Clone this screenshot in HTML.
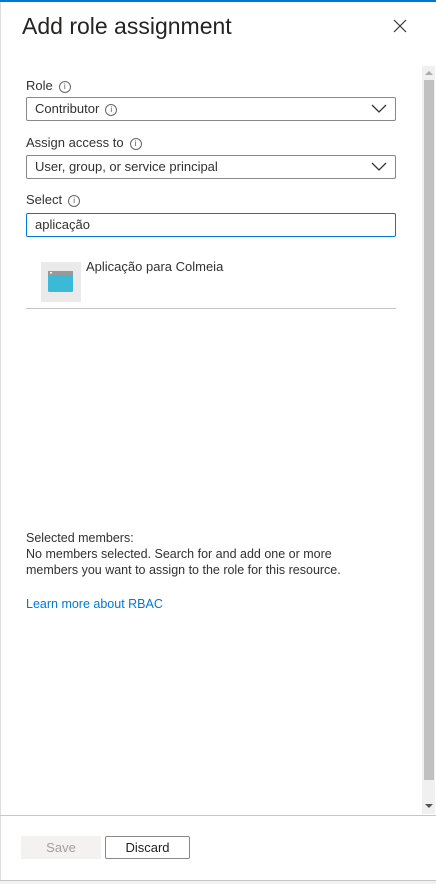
<!DOCTYPE html><html><head><style>
body{margin:0;width:436px;height:884px;position:relative;overflow:hidden;background:#fff;font-family:"Liberation Sans",sans-serif;color:#323130}
.a{position:absolute}
.lbl{font-size:13px}
.box{position:absolute;left:26px;height:22px;border:1px solid #8a8886;border-radius:2px;font-size:13px;line-height:22px;padding-left:8px;box-sizing:content-box;width:360px}
.i{display:inline-block;width:10px;height:10px;border:1px solid #666;border-radius:50%;font-size:8px;line-height:10px;text-align:center;vertical-align:1px;margin-left:6px;color:#555}
.chev{position:absolute;right:8px;top:6px}
</style></head><body>
<div class="a" style="left:0;top:0;width:436px;height:2px;background:#0078d4"></div>
<div class="a" style="left:0;top:2px;width:1px;height:878px;background:#ddd"></div>
<div class="a" style="left:22px;top:13px;font-size:23px;color:#252423">Add role assignment</div>
<svg class="a" style="left:393px;top:19px" width="14" height="14"><path d="M1 1L13 13M13 1L1 13" stroke="#333" stroke-width="1.2"/></svg>
<div class="a lbl" style="left:26px;top:78px">Role<span class="i">i</span></div>
<div class="box" style="top:97px">Contributor<span class="i">i</span><svg class="chev" width="16" height="10"><path d="M1 1L8 8L15 1" stroke="#333" fill="none" stroke-width="1.3"/></svg></div>
<div class="a lbl" style="left:26px;top:135px">Assign access to<span class="i">i</span></div>
<div class="box" style="top:155px">User, group, or service principal<svg class="chev" width="16" height="10"><path d="M1 1L8 8L15 1" stroke="#333" fill="none" stroke-width="1.3"/></svg></div>
<div class="a lbl" style="left:26px;top:192px">Select<span class="i">i</span></div>
<div class="box" style="top:213px;border-color:#0078d4">aplicação</div>
<div class="a" style="left:41px;top:262px;width:40px;height:40px;background:#eaeaea"></div>
<svg class="a" style="left:48px;top:271px" width="26" height="22"><rect x="0" y="0" width="25" height="21" rx="1" fill="#3bbad8"/><rect x="0" y="0" width="25" height="4" fill="#999"/><rect x="2" y="1" width="2" height="1.5" fill="#fff"/></svg>
<div class="a" style="left:86px;top:259px;font-size:13px">Aplicação para Colmeia</div>
<div class="a" style="left:26px;top:308px;width:370px;height:1px;background:#c8c6c4"></div>
<div class="a" style="left:26px;top:530px;font-size:12.5px;line-height:16px">Selected members:<br>No members selected. Search for and add one or more<br>members you want to assign to the role for this resource.</div>
<div class="a" style="left:26px;top:597px;font-size:12.5px;color:#0078d4">Learn more about RBAC</div>
<div class="a" style="left:422px;top:66px;width:13px;height:748px;background:#f0f0f0"></div>
<div class="a" style="left:424px;top:80px;width:10px;height:700px;background:#c1c1c1"></div>
<svg class="a" style="left:425px;top:70px" width="8" height="6"><path d="M0 5L4 1L8 5Z" fill="#aaa"/></svg>
<svg class="a" style="left:425px;top:803px" width="8" height="6"><path d="M0 1L4 5L8 1Z" fill="#555"/></svg>
<div class="a" style="left:0;top:815px;width:436px;height:1px;background:#c8c6c4"></div>
<div class="a" style="left:21px;top:836px;width:80px;height:23px;background:#f3f2f1;color:#a19f9d;font-size:13px;text-align:center;line-height:23px">Save</div>
<div class="a" style="left:105px;top:836px;width:83px;height:21px;border:1px solid #8a8886;border-radius:2px;font-size:13px;text-align:center;line-height:21px;color:#222">Discard</div>
<div class="a" style="left:0;top:880px;width:436px;height:1px;background:#c8c6c4"></div>
<div class="a" style="left:0;top:881px;width:436px;height:3px;background:#f5f3f0"></div>
</body></html>
